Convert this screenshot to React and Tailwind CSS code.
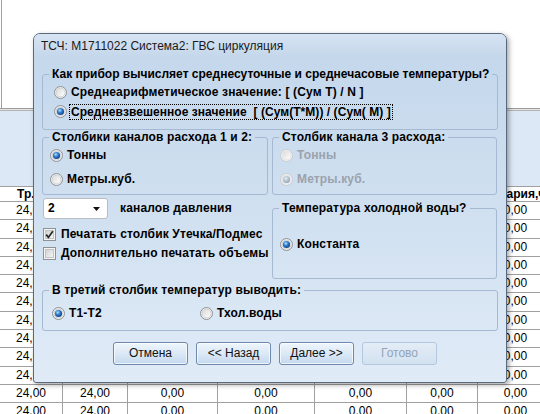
import React from "react";

const COLS = ["w-[63px]", "w-[65px]", "w-[90px]", "w-[97px]", "w-[92px]", "w-[71px]", "w-[76px]"];
const HEAD = ["Тр.,ч", "Тн,ч", "Q,Гкал", "M1,т", "M2,т", "Мут,т", "Авария,ч"];
const ROW = ["24,00", "24,00", "0,00", "0,00", "0,00", "0,00", "0,00"];

function Defs() {
  return (
    <svg width="0" height="0" className="absolute">
      <defs>
        <linearGradient id="rb-bg" x1="0" y1="0" x2="1" y2="1">
          <stop offset="0" stopColor="#d9d9d9" />
          <stop offset="1" stopColor="#ffffff" />
        </linearGradient>
        <radialGradient id="rb-dot" cx="0.4" cy="0.35" r="0.7">
          <stop offset="0" stopColor="#b7e2ff" />
          <stop offset="0.45" stopColor="#2f7fd0" />
          <stop offset="1" stopColor="#0d3b7a" />
        </radialGradient>
        <radialGradient id="rb-dot-off" cx="0.4" cy="0.35" r="0.7">
          <stop offset="0" stopColor="#e2ecf6" />
          <stop offset="1" stopColor="#8d9fb4" />
        </radialGradient>
        <linearGradient id="cb-bg" x1="0" y1="0" x2="1" y2="1">
          <stop offset="0" stopColor="#cfcfcf" />
          <stop offset="1" stopColor="#f7f7f7" />
        </linearGradient>
      </defs>
    </svg>
  );
}

function Radio({ checked, disabled }) {
  return (
    <svg width="13" height="13" viewBox="0 0 13 13" className="shrink-0">
      <circle cx="6.5" cy="6.5" r="6" fill="#f4f4f4" stroke={disabled ? "#c6cbd1" : "#8e9196"} />
      <circle cx="6.5" cy="6.5" r="4.5" fill="url(#rb-bg)" stroke={disabled ? "#e4e4e4" : "#d0d0d0"} />
      {checked && <circle cx="6.5" cy="6.5" r="3.6" fill={disabled ? "url(#rb-dot-off)" : "url(#rb-dot)"} />}
    </svg>
  );
}

function Check({ checked }) {
  return (
    <svg width="13" height="13" viewBox="0 0 13 13" className="shrink-0">
      <rect x="0.5" y="0.5" width="12" height="12" fill="#f4f4f4" stroke="#8e9196" />
      <rect x="2.5" y="2.5" width="8" height="8" fill="url(#cb-bg)" stroke="#c4c4c4" />
      {checked && <path d="M3.2 6.6 L5.4 9.4 L9.8 3.2" fill="none" stroke="#262626" strokeWidth="1.7" />}
    </svg>
  );
}

function RadioRow({ checked, disabled, children, className = "" }) {
  return (
    <div className={`flex items-center gap-[4px] h-[19px] ${className}`}>
      <Radio checked={checked} disabled={disabled} />
      <span className={disabled ? "text-[#9aa2ac]" : "text-black"}>{children}</span>
    </div>
  );
}

// fieldset + legend, padding goes on the inner div so the legend stays put
function Group({ label, className = "", inner = "", legend = "", children }) {
  return (
    <fieldset className={`border border-[#a5b9d3] rounded-[3px] ${className}`}>
      <legend className={`ml-[6px] px-[3px] leading-[13px] ${legend}`}>{label}</legend>
      <div className={inner}>{children}</div>
    </fieldset>
  );
}

function Btn({ children, disabled }) {
  return (
    <button
      className={`w-[75px] h-[23px] rounded-[3px] border font-['Liberation_Sans',sans-serif] font-normal tracking-normal text-[12px] ${
        disabled
          ? "border-[#b3c7de] bg-gradient-to-b from-[#e3edf7] to-[#d3e1f0] text-[#93a3b7]"
          : "border-[#6f89ad] bg-gradient-to-b from-[#eef5fc] via-[#dce9f6] to-[#c3d8ee] text-[#111] shadow-[inset_0_0_0_1px_rgba(255,255,255,0.7)]"
      }`}
    >
      {children}
    </button>
  );
}

function Background() {
  return (
    <div className="font-['Liberation_Sans',sans-serif] text-[12px] text-black">
      <div className="ml-[1px] h-[108px] border-l border-[#a0a0a0]" />
      <div className="h-[1px] bg-[#9a9a9a]" />
      <div className="h-[1px] bg-[#e6e6e6]" />
      <div className="h-[1px] bg-[#b4b4b4]" />
      <div className="h-[75px] bg-[#dce8f5]" />
      <div className="flex h-[16px] border-y border-[#a0a0a0] font-bold leading-[14px] whitespace-nowrap">
        {HEAD.map((h, i) => (
          <div key={i} className={`${COLS[i]} shrink-0 border-r border-[#a0a0a0] flex justify-center ${i === 6 ? "pl-[5px]" : ""}`}>{h}</div>
        ))}
      </div>
      {Array.from({ length: 12 }).map((_, r) => (
        <div key={r} className="flex h-[18.3px] border-b border-[#a0a0a0] leading-[17px]">
          {ROW.map((v, i) => (
            <div key={i} className={`${COLS[i]} shrink-0 border-r border-[#a0a0a0] text-center`}>{v}</div>
          ))}
        </div>
      ))}
    </div>
  );
}

export default function App() {
  return (
    <div className="relative w-[540px] h-[414px] overflow-hidden bg-white">
      <Defs />
      <Background />
      <div className="absolute left-[33px] top-[33px] w-[474px] h-[350px] rounded-t-[7px] rounded-b-[3px] border border-[#5a6a7e] bg-gradient-to-b from-[#c3d6eb] via-[#d0e0f0] to-[#e0ebf7] shadow-[2px_2px_5px_rgba(0,0,0,0.35)]">
        <div className="h-[24px] px-[7px] flex items-center font-['Liberation_Sans',sans-serif] text-[12px] text-[#1a1a1a] rounded-t-[6px] bg-gradient-to-b from-[#d6e4f3] to-[#c4d6ea]">
          ТСЧ: М1711022 Система2: ГВС циркуляция
        </div>
        <div className="px-[8px] font-['Liberation_Sans',sans-serif] font-bold text-[12px] tracking-[0.15px] leading-[13px] text-black whitespace-nowrap">
          <Group
            label="Как прибор вычисляет среднесуточные и среднечасовые температуры?"
            className="mt-[10px]"
            legend="tracking-normal"
            inner="pl-[11px] pt-[2px] pb-[8px]"
          >
            <RadioRow>Среднеарифметическое значение: [ (Сум Т) / N ]</RadioRow>
            <div className="flex items-center gap-[2px] h-[19px]">
              <Radio checked />
              <span className="border border-dotted border-black px-[1px] leading-[14px] tracking-[0.05px]">
                Средневзвешенное значение&nbsp; [ (Сум(Т*М)) / (Сум( М) ]
              </span>
            </div>
          </Group>

          <div className="mt-[1px] grid grid-cols-[226px_225px] gap-x-[4px]">
            <Group label="Столбики каналов расхода 1 и 2:" inner="pl-[7px] pt-[2px] pb-[5px] flex flex-col gap-[5px]">
              <RadioRow checked>Тонны</RadioRow>
              <RadioRow>Метры.куб.</RadioRow>
            </Group>
            <Group label="Столбик канала 3 расхода:" inner="pl-[7px] pt-[2px] pb-[5px] flex flex-col gap-[5px]">
              <RadioRow disabled>Тонны</RadioRow>
              <RadioRow checked disabled>Метры.куб.</RadioRow>
            </Group>

            <div className="mt-[3px] pl-[1px]">
              <div className="flex items-center">
                <div className="w-[65px] h-[21px] rounded-[3px] border border-[#b9bcc2] bg-white flex items-center justify-between pl-[4px] pr-[7px]">
                  <span>2</span>
                  <svg width="7" height="4" viewBox="0 0 7 4"><path d="M0 0 H7 L3.5 4 Z" fill="#111" /></svg>
                </div>
                <span className="ml-[12px]">каналов давления</span>
              </div>
              <div className="mt-[6px] flex items-center gap-[5px] h-[19px]">
                <Check checked />
                <span>Печатать столбик Утечка/Подмес</span>
              </div>
              <div className="flex items-center gap-[5px] h-[19px]">
                <Check />
                <span>Дополнительно печатать объемы</span>
              </div>
            </div>
            <Group label="Температура холодной воды?" className="mt-[7px] h-[77px]" inner="pl-[7px] pt-[20px]">
              <RadioRow checked>Константа</RadioRow>
            </Group>
          </div>

          <Group label="В третий столбик температур выводить:" className="mt-[5px]" inner="pl-[9px] pt-[7px] pb-[7px] flex">
            <RadioRow checked className="w-[148px]">Т1-Т2</RadioRow>
            <RadioRow>Тхол.воды</RadioRow>
          </Group>

          <div className="mt-[11px] ml-[71px] flex gap-[8px]">
            <Btn>Отмена</Btn>
            <Btn>&lt;&lt; Назад</Btn>
            <Btn>Далее &gt;&gt;</Btn>
            <Btn disabled>Готово</Btn>
          </div>
        </div>
      </div>
    </div>
  );
}
